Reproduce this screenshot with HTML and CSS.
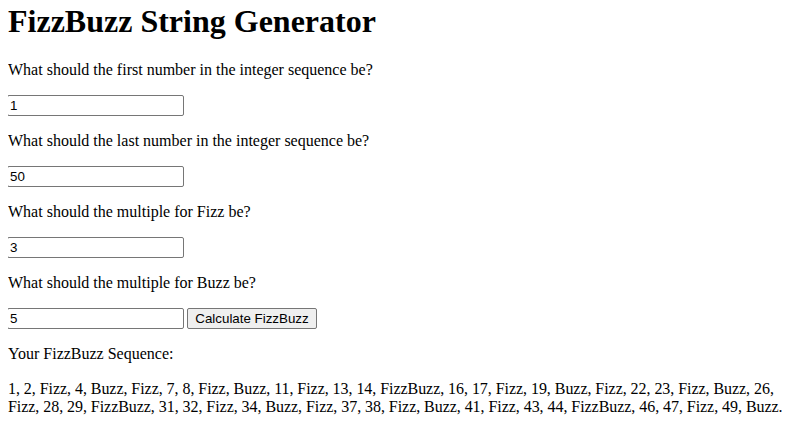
FILE: index.html
```html
<!DOCTYPE html>
<html>
<head>
<meta charset="utf-8">
<title>FizzBuzz String Generator</title>
<link rel="stylesheet" href="styles.css">
</head>
<body class="page">
<h1 class="title">FizzBuzz String Generator</h1>
<p class="question">What should the first number in the integer sequence be?</p>
<p class="field"><input class="num-input" type="text" value="1"></p>
<p class="question">What should the last number in the integer sequence be?</p>
<p class="field"><input class="num-input" type="text" value="50"></p>
<p class="question">What should the multiple for Fizz be?</p>
<p class="field"><input class="num-input" type="text" value="3"></p>
<p class="question">What should the multiple for Buzz be?</p>
<p class="field"><input class="num-input" type="text" value="5"> <button class="calc-btn" type="button">Calculate FizzBuzz</button></p>
<p class="question">Your FizzBuzz Sequence:</p>
<p class="result">1, 2, Fizz, 4, Buzz, Fizz, 7, 8, Fizz, Buzz, 11, Fizz, 13, 14, FizzBuzz, 16, 17, Fizz, 19, Buzz, Fizz, 22, 23, Fizz, Buzz, 26, Fizz, 28, 29, FizzBuzz, 31, 32, Fizz, 34, Buzz, Fizz, 37, 38, Fizz, Buzz, 41, Fizz, 43, 44, FizzBuzz, 46, 47, Fizz, 49, Buzz.</p>
</body>
</html>
```
FILE: styles.css
```css
html, body {
  background: #ffffff;
}
.page {
  margin: 0 8px 8px 8px;
  font-family: "Liberation Serif", "Times New Roman", serif;
  font-size: 16px;
  color: #000000;
}
.title {
  font-size: 32px;
  font-weight: bold;
  margin: 3px 0 21px 0;
}
.question, .field, .result {
  margin: 16px 0;
}
.field {
  line-height: 21px;
  height: 21px;
}
.result {
  margin-right: -8px;
  letter-spacing: -0.05px;
  margin-top: 17px;
}
.num-input {
  box-sizing: border-box;
  width: 177px;
  height: 21px;
  border: 1px solid #767676;
  border-radius: 2px;
  padding: 1px 2px;
  font-family: "Liberation Sans", Arial, sans-serif;
  font-size: 13.333px;
  color: #000;
  background: #fff;
  vertical-align: top;
  margin: 0 0 0 -1px;
}
.calc-btn {
  box-sizing: border-box;
  width: 130px;
  height: 21px;
  border: 1px solid #767676;
  border-radius: 2px;
  padding: 1px 4px;
  background: #efefef;
  font-family: "Liberation Sans", Arial, sans-serif;
  font-size: 13.333px;
  color: #000;
  vertical-align: top;
  margin: 0 0 0 -1px;
}
```
